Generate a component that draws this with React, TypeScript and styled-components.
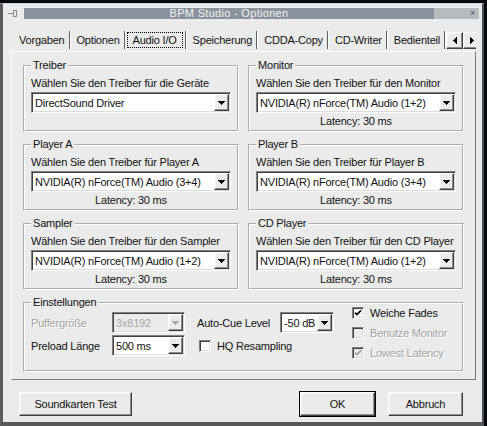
import React from 'react';
import styled, { createGlobalStyle, css } from 'styled-components';

const face = '#ebebeb';

const GlobalStyle = createGlobalStyle`
  html, body {
    margin: 0;
    padding: 0;
    background: #05070f;
  }
  body {
    font-family: "Liberation Sans", Arial, sans-serif;
    font-size: 11px;
    letter-spacing: -0.2px;
    color: #111;
  }
  * {
    box-sizing: border-box;
  }
`;

const raised = css`
  border: 1px solid;
  border-color: #fff #404040 #404040 #fff;
  box-shadow: inset -1px -1px 0 #8c8c8c, inset 1px 1px 0 #f4f4f4;
  background: ${face};
`;

const sunken = css`
  border: 1px solid;
  border-color: #808080 #fff #fff #808080;
  box-shadow: inset 1px 1px 0 #404040, inset -1px -1px 0 #dcdcdc;
`;

const Desktop = styled.div`
  width: 487px;
  height: 426px;
  padding-top: 3px;
  background: #05070f;
  overflow: hidden;
`;

const Window = styled.div`
  width: 484px;
  height: 423px;
  display: flex;
  flex-direction: column;
  background: ${face};
  border-left: 3px solid #5c5c5c;
  border-right: 2px solid #4e4e4e;
  border-top: 1px solid #d4d4d4;
  border-bottom: 4px solid #585858;
`;

const TitleBar = styled.div`
  display: flex;
  align-items: stretch;
  height: 11px;
  margin-top: 4px;
  padding: 0 3px 0 5px;
`;

const SysIcon = styled.div`
  width: 10px;
  margin-right: 6px;
  display: flex;
  align-items: center;
`;

const Caption = styled.div`
  flex: 1;
  background: #89929d;
  color: #f2f2f2;
  text-align: center;
  line-height: 11px;
  font-size: 11px;
  letter-spacing: 0.3px;
`;

const CaptionEnd = styled.div`
  width: 45px;
  background: #b7babe;
  color: #555;
  font-size: 9px;
  line-height: 11px;
  text-align: right;
  padding-right: 4px;
`;

const Body = styled.div`
  flex: 1;
  display: flex;
  flex-direction: column;
  padding: 0 6px 0 8px;
`;

const TabRow = styled.div`
  display: flex;
  height: 21px;
  margin-top: 11px;
  padding-left: 2px;
  overflow: hidden;
`;

const Tab = styled.div<{ $selected?: boolean }>`
  flex: none;
  height: 18px;
  margin-top: 1px;
  margin-right: 1px;
  padding: ${p => (p.$selected ? '0 2px 0 1px' : '0 4px 0 6px')};
  border-right: 1px solid #5e5e5e;
  box-shadow: 1px 0 0 #fff;
  display: flex;
  align-items: center;
  white-space: nowrap;
`;

const TabFocus = styled.span`
  height: 16px;
  margin-top: -1px;
  padding: 0 5px;
  line-height: 14px;
  border: 1px dotted #000;
`;

const TabScroll = styled.div`
  flex: none;
  margin-left: auto;
  margin-right: 2px;
  display: flex;
  padding-top: 2px;
`;

const ArrowButton = styled.div`
  ${raised};
  width: 17px;
  height: 17px;
  display: flex;
  align-items: center;
  justify-content: center;
`;

const Panel = styled.div`
  height: 329px;
  border: 1px solid;
  border-color: #fff #7a7a7a #7a7a7a #fff;
  padding: 7px 0 0 11px;
`;

const GroupGrid = styled.div`
  display: grid;
  grid-template-columns: 216px 216px;
  column-gap: 9px;
  row-gap: 6px;
`;

const Group = styled.fieldset<{ $wide?: boolean }>`
  margin: 0;
  min-width: 0;
  padding: 0 6px 2px 6px;
  border: 2px groove #fff;
  grid-column: ${p => (p.$wide ? '1 / -1' : 'auto')};
`;

const Legend = styled.legend`
  padding: 0 2px;
  line-height: 13px;
`;

const Hint = styled.div`
  margin-top: 5px;
  line-height: 12px;
  white-space: nowrap;
`;

const Latency = styled.div`
  margin-top: 2px;
  height: 13px;
  line-height: 13px;
  text-align: center;
`;

const Combo = styled.div<{ $w: number; $disabled?: boolean }>`
  ${sunken};
  width: ${p => p.$w}px;
  height: 21px;
  padding: 1px 1px 1px 3px;
  display: flex;
  align-items: center;
  background: ${p => (p.$disabled ? face : '#fff')};
  color: ${p => (p.$disabled ? '#a6a6a6' : '#111')};
  margin-top: 3px;
`;

const ComboText = styled.span`
  flex: 1;
  white-space: nowrap;
  overflow: hidden;
`;

const ComboButton = styled.div`
  ${raised};
  flex: none;
  width: 15px;
  height: 17px;
  display: flex;
  align-items: center;
  justify-content: center;
`;

const Settings = styled.div`
  display: flex;
  align-items: flex-start;
  padding-bottom: 5px;
`;

const LeftGrid = styled.div`
  display: grid;
  grid-template-columns: 81px 73px;
  grid-auto-rows: 21px;
  row-gap: 2px;
  align-items: center;
  margin-top: 3px;

  & > ${Combo} {
    margin-top: 0;
  }
`;

const Label = styled.span<{ $disabled?: boolean }>`
  white-space: nowrap;
  color: ${p => (p.$disabled ? '#a3a3a3' : '#111')};
  text-shadow: ${p => (p.$disabled ? '1px 1px 0 #fff' : 'none')};
`;

const MidColumn = styled.div`
  display: flex;
  flex-direction: column;
  row-gap: 2px;
  margin-left: 12px;
  margin-top: 3px;
`;

const MidRow = styled.div<{ $indent?: number }>`
  height: 21px;
  display: flex;
  align-items: center;
  padding-left: ${p => p.$indent || 0}px;

  & > ${Combo} {
    margin-top: 0;
  }
`;

const CueLabel = styled(Label)`
  width: 83px;
`;

const RightColumn = styled.div`
  display: flex;
  flex-direction: column;
  margin-left: 18px;
  margin-top: -6px;
`;

const CheckRow = styled.div`
  height: 20px;
  display: flex;
  align-items: center;
  column-gap: 6px;
  white-space: nowrap;
`;

const CheckBox = styled.span<{ $disabled?: boolean }>`
  ${sunken};
  width: 12px;
  height: 12px;
  flex: none;
  display: flex;
  align-items: center;
  justify-content: center;
  background: ${p => (p.$disabled ? face : '#fff')};
`;

const Footer = styled.div`
  display: flex;
  column-gap: 13px;
  padding: 12px 13px 0 8px;
`;

const Button = styled.button<{ $w: number; $default?: boolean }>`
  ${raised};
  width: ${p => p.$w}px;
  height: 24px;
  padding: 0;
  font-family: "Liberation Sans", Arial, sans-serif;
  font-size: 11px;
  letter-spacing: -0.2px;
  color: #111;
  ${p =>
    p.$default &&
    css`
      outline: 1px solid #000;
      outline-offset: 0;
    `}
`;

const Spacer = styled.div`
  flex: 1;
`;

const DownArrow = ({ color = '#000' }: { color?: string }) => (
  <svg width="7" height="4" viewBox="0 0 7 4" shapeRendering="crispEdges">
    <path d="M0 0h7v1H0z M1 1h5v1H1z M2 2h3v1H2z M3 3h1v1H3z" fill={color} />
  </svg>
);

const SideArrow = ({ dir }: { dir: 'left' | 'right' }) => (
  <svg width="4" height="7" viewBox="0 0 4 7" shapeRendering="crispEdges">
    {dir === 'left' ? (
      <path d="M3 0h1v7H3z M2 1h1v5H2z M1 2h1v3H1z M0 3h1v1H0z" fill="#000" />
    ) : (
      <path d="M0 0h1v7H0z M1 1h1v5H1z M2 2h1v3H2z M3 3h1v1H3z" fill="#000" />
    )}
  </svg>
);

const Check = ({ color }: { color: string }) => (
  <svg width="8" height="8" viewBox="0 0 8 8">
    <polyline points="1,3.6 3,5.6 7,1.4" fill="none" stroke={color} strokeWidth="1.7" />
  </svg>
);

interface ComboProps {
  value: string;
  width: number;
  disabled?: boolean;
}

const ComboBox: React.FC<ComboProps> = ({ value, width, disabled }) => (
  <Combo $w={width} $disabled={disabled}>
    <ComboText>{value}</ComboText>
    <ComboButton>
      <DownArrow color={disabled ? '#a6a6a6' : '#000'} />
    </ComboButton>
  </Combo>
);

interface CheckProps {
  label: string;
  checked?: boolean;
  disabled?: boolean;
}

const CheckOption: React.FC<CheckProps> = ({ label, checked, disabled }) => (
  <CheckRow>
    <CheckBox $disabled={disabled}>{checked && <Check color={disabled ? '#a0a0a0' : '#000'} />}</CheckBox>
    <Label $disabled={disabled}>{label}</Label>
  </CheckRow>
);

const tabs = ['Vorgaben', 'Optionen', 'Audio I/O', 'Speicherung', 'CDDA-Copy', 'CD-Writer', 'Bedienteil'];

const drivers = [
  { title: 'Treiber', hint: 'Wählen Sie den Treiber für die Geräte', value: 'DirectSound Driver', latency: '' },
  { title: 'Monitor', hint: 'Wählen Sie den Treiber für den Monitor', value: 'NVIDIA(R) nForce(TM) Audio (1+2)', latency: '30 ms' },
  { title: 'Player A', hint: 'Wählen Sie den Treiber für Player A', value: 'NVIDIA(R) nForce(TM) Audio (3+4)', latency: '30 ms' },
  { title: 'Player B', hint: 'Wählen Sie den Treiber für Player B', value: 'NVIDIA(R) nForce(TM) Audio (3+4)', latency: '30 ms' },
  { title: 'Sampler', hint: 'Wählen Sie den Treiber für den Sampler', value: 'NVIDIA(R) nForce(TM) Audio (1+2)', latency: '30 ms' },
  { title: 'CD Player', hint: 'Wählen Sie den Treiber für den CD Player', value: 'NVIDIA(R) nForce(TM) Audio (1+2)', latency: '30 ms' },
];

const App: React.FC = () => {
  return (
    <>
      <GlobalStyle />
      <Desktop>
        <Window>
          <TitleBar>
            <SysIcon>
              <svg width="10" height="9" viewBox="0 0 10 9" shapeRendering="crispEdges">
                <path d="M0 4h5v1H0z M5 1h1v7H5z M6 1h3v1H6z M8 2h1v6H8z M6 7h2v1H6z" fill="#8a8a8a" />
              </svg>
            </SysIcon>
            <Caption>BPM Studio - Optionen</Caption>
            <CaptionEnd>×</CaptionEnd>
          </TitleBar>
          <Body>
            <TabRow>
              {tabs.map(t =>
                t === 'Audio I/O' ? (
                  <Tab key={t} $selected>
                    <TabFocus>{t}</TabFocus>
                  </Tab>
                ) : (
                  <Tab key={t}>{t}</Tab>
                )
              )}
              <TabScroll>
                <ArrowButton>
                  <SideArrow dir="left" />
                </ArrowButton>
                <ArrowButton>
                  <SideArrow dir="right" />
                </ArrowButton>
              </TabScroll>
            </TabRow>
            <Panel>
              <GroupGrid>
                {drivers.map(d => (
                  <Group key={d.title}>
                    <Legend>{d.title}</Legend>
                    <Hint>{d.hint}</Hint>
                    <ComboBox value={d.value} width={200} />
                    <Latency>{d.latency ? `Latency: ${d.latency}` : ''}</Latency>
                  </Group>
                ))}
                <Group $wide>
                  <Legend>Einstellungen</Legend>
                  <Settings>
                    <LeftGrid>
                      <Label $disabled>Puffergröße</Label>
                      <ComboBox value="3x8192" width={73} disabled />
                      <Label>Preload Länge</Label>
                      <ComboBox value="500 ms" width={73} />
                    </LeftGrid>
                    <MidColumn>
                      <MidRow>
                        <CueLabel>Auto-Cue Level</CueLabel>
                        <ComboBox value="-50 dB" width={54} />
                      </MidRow>
                      <MidRow $indent={2}>
                        <CheckOption label="HQ Resampling" />
                      </MidRow>
                    </MidColumn>
                    <RightColumn>
                      <CheckOption label="Weiche Fades" checked />
                      <CheckOption label="Benutze Monitor" disabled />
                      <CheckOption label="Lowest Latency" checked disabled />
                    </RightColumn>
                  </Settings>
                </Group>
              </GroupGrid>
            </Panel>
            <Footer>
              <Button $w={113}>Soundkarten Test</Button>
              <Spacer />
              <Button $w={75} $default>
                OK
              </Button>
              <Button $w={75}>Abbruch</Button>
            </Footer>
          </Body>
        </Window>
      </Desktop>
    </>
  );
};

export default App;
